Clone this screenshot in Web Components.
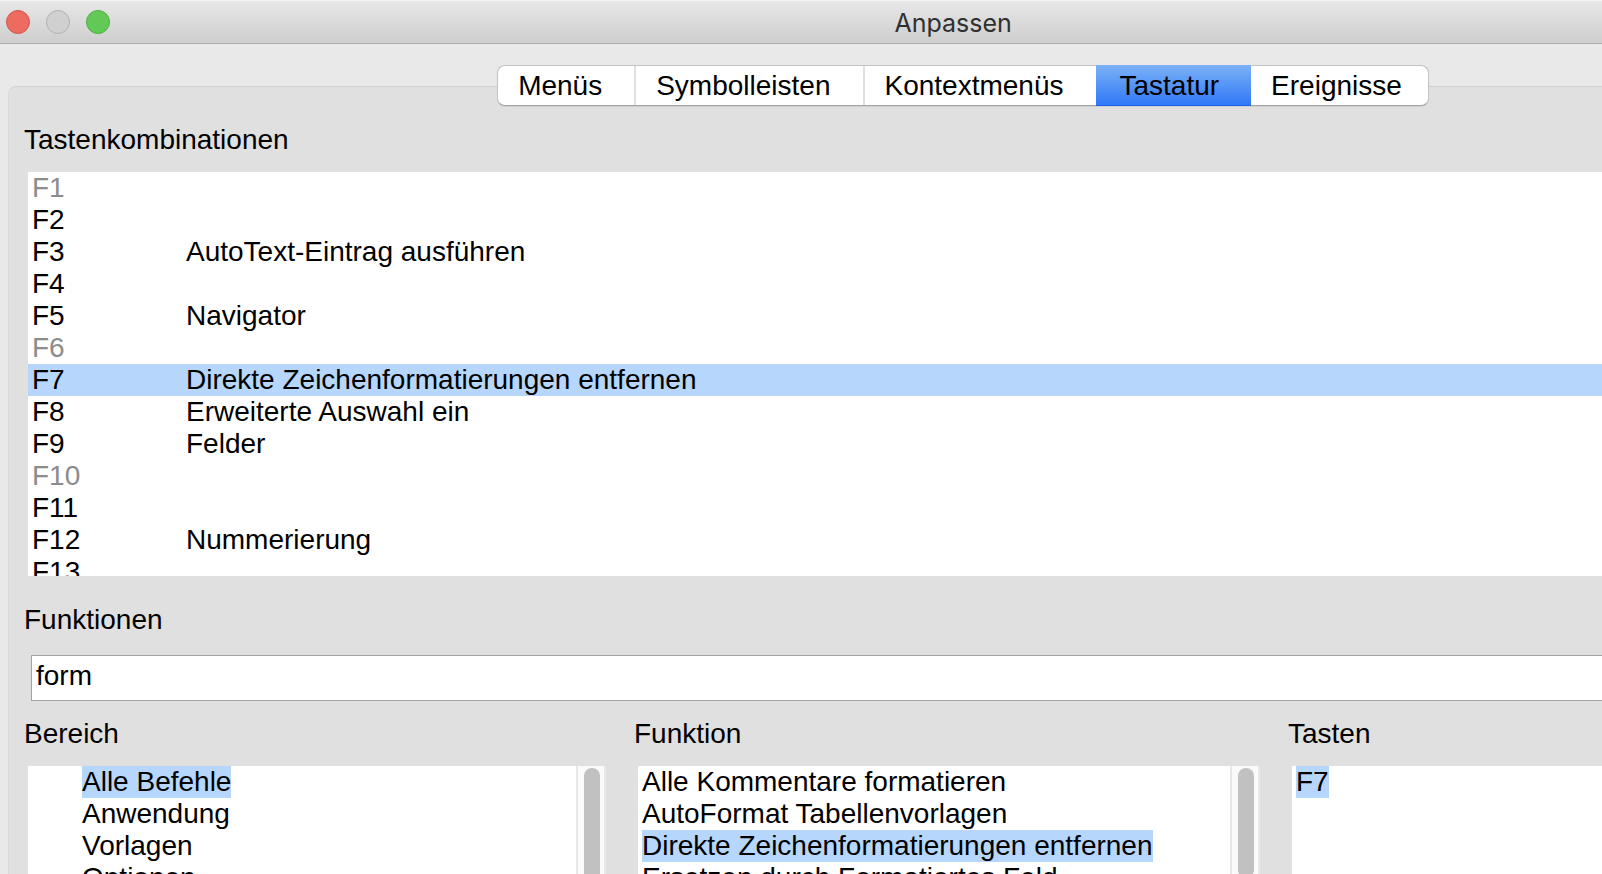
<!DOCTYPE html>
<html lang="de">
<head>
<meta charset="utf-8">
<title>Anpassen</title>
<style>
    body {
        margin: 0;
        height: 100vh;
        overflow: hidden;
        background: #e9e9e9;
        color: #000;
        font: 28px/32px "Liberation Sans", Arial, sans-serif;
    }
</style>
</head>
<body>
<customize-dialog></customize-dialog>

<script>
class TitleBar extends HTMLElement {
    constructor() {
        super();
        this.attachShadow({ mode: 'open' });
        this.shadowRoot.innerHTML = `
            <style>
                :host {
                    display: grid;
                    grid-template-columns: 19% 1fr;
                    align-items: center;
                    box-sizing: border-box;
                    height: 44px;
                    border-top: 1px solid #f4f4f4;
                    border-bottom: 1px solid #ababab;
                    background: linear-gradient(#e7e7e7, #cecece);
                }
                .lights {
                    display: flex;
                    gap: 16px;
                    padding-left: 6px;
                }
                button {
                    width: 24px;
                    height: 24px;
                    padding: 0;
                    border: 1px solid #b3b3b3;
                    border-radius: 50%;
                    background: #d0d0d0;
                }
                .close {
                    background: #ee6b60;
                    border-color: #d2564d;
                }
                .zoom {
                    background: #62c956;
                    border-color: #4fae42;
                }
                h1 {
                    margin: 0;
                    padding-top: 2px;
                    text-align: center;
                    font: 400 25px/32px Inter, sans-serif;
                    color: #303030;
                }
            </style>
            <div class="lights">
                <button class="close" aria-label="Schließen"></button>
                <button disabled aria-label="Minimieren"></button>
                <button class="zoom" aria-label="Zoomen"></button>
            </div>
            <h1><slot></slot></h1>
        `;
    }
}

class TabStrip extends HTMLElement {
    constructor() {
        super();
        this.attachShadow({ mode: 'open' });
        this.shadowRoot.innerHTML = `
            <style>
                :host {
                    display: flex;
                    justify-content: center;
                }
                div {
                    display: flex;
                    border: 1px solid #c3c3c3;
                    border-bottom-color: #a3a3a3;
                    border-radius: 8px;
                    background: #fff;
                    box-shadow: 0 1px 1px #cfcfcf;
                }
                button {
                    font: inherit;
                    color: inherit;
                    padding: 4px 32px 3px 20px;
                    border: 0;
                    border-right: 2px solid #e0e0e0;
                    background: none;
                }
                button:last-child {
                    padding-right: 26px;
                    border-right: 0;
                }
                button[aria-selected="true"] {
                    margin: -1px 0 -1px -2px;
                    padding: 5px 32px 3px 24px;
                    border-right: 0;
                    border-bottom: 1px solid #2361ee;
                    background: linear-gradient(#7bb1f5, #3079f8);
                }
            </style>
            <div role="tablist"></div>
        `;
    }

    connectedCallback() {
        const list = this.shadowRoot.querySelector('div');
        this.getAttribute('tabs').split(',').forEach((name) => {
            const button = document.createElement('button');
            button.setAttribute('role', 'tab');
            button.setAttribute('aria-selected', name === this.getAttribute('active'));
            button.textContent = name;
            button.addEventListener('click', () => this.select(button));
            list.appendChild(button);
        });
    }

    select(button) {
        this.shadowRoot.querySelectorAll('button').forEach((tab) => {
            tab.setAttribute('aria-selected', tab === button);
        });
    }
}

class ShortcutTable extends HTMLElement {
    constructor() {
        super();
        this.attachShadow({ mode: 'open' });
        this.rows = [
            ['F1', '', true],
            ['F2', ''],
            ['F3', 'AutoText-Eintrag ausführen'],
            ['F4', ''],
            ['F5', 'Navigator'],
            ['F6', '', true],
            ['F7', 'Direkte Zeichenformatierungen entfernen'],
            ['F8', 'Erweiterte Auswahl ein'],
            ['F9', 'Felder'],
            ['F10', '', true],
            ['F11', ''],
            ['F12', 'Nummerierung'],
            ['F13', '']
        ];
        this.selected = 'F7';
    }

    connectedCallback() {
        const rows = this.rows.map(([key, command, reserved]) => {
            const state = reserved ? 'reserved' : key === this.selected ? 'selected' : '';
            return `<tr class="${state}"><td class="key">${key}</td><td>${command}</td></tr>`;
        }).join('');

        this.shadowRoot.innerHTML = `
            <style>
                :host {
                    display: block;
                    height: 404px;
                    overflow: hidden;
                    background: #fff;
                }
                table {
                    width: 100%;
                    border-collapse: collapse;
                    table-layout: fixed;
                }
                td {
                    height: 32px;
                    padding: 0;
                }
                .key {
                    width: 154px;
                    padding-left: 4px;
                }
                .reserved {
                    color: #8c8c8c;
                }
                .selected {
                    background: #b7d6fb;
                }
            </style>
            <table aria-label="Tastenkombinationen"><tbody>${rows}</tbody></table>
        `;
    }
}

class ListPane extends HTMLElement {
    constructor() {
        super();
        this.attachShadow({ mode: 'open' });
        this.shadowRoot.innerHTML = `
            <style>
                :host {
                    display: flex;
                    flex-direction: column;
                    gap: 16px;
                    min-width: 0;
                    --indent: 4px;
                    --thumb: 140px;
                }
                h2 {
                    margin: 0;
                    font: inherit;
                }
                .box {
                    flex: 1;
                    display: flex;
                    min-height: 0;
                    overflow: hidden;
                    margin-left: 4px;
                    background: #fff;
                }
                ul {
                    flex: 1;
                    margin: 0;
                    padding: 0 0 0 var(--indent);
                    list-style: none;
                    white-space: nowrap;
                }
                li {
                    width: fit-content;
                }
                li[aria-selected="true"] {
                    background: #b7d6fb;
                }
                .track {
                    box-sizing: border-box;
                    width: 30px;
                    padding: 2px 4px 0 6px;
                    border: solid #e8e8e8;
                    border-width: 0 2px;
                    background: #fafafa;
                }
                .thumb {
                    width: 16px;
                    height: var(--thumb);
                    border-radius: 8px;
                    background: #c1c1c1;
                }
                :host(:not([scrollable])) .track {
                    display: none;
                }
            </style>
            <h2 id="label"></h2>
            <div class="box">
                <ul role="listbox" aria-labelledby="label"></ul>
                <div class="track"><div class="thumb"></div></div>
            </div>
        `;
    }

    connectedCallback() {
        this.shadowRoot.querySelector('h2').textContent = this.getAttribute('label');
        const list = this.shadowRoot.querySelector('ul');
        this.getAttribute('items').split('|').forEach((text) => {
            const item = document.createElement('li');
            item.setAttribute('role', 'option');
            item.setAttribute('aria-selected', text === this.getAttribute('selected'));
            item.textContent = text;
            list.appendChild(item);
        });
    }
}

class SearchField extends HTMLElement {
    constructor() {
        super();
        this.attachShadow({ mode: 'open' });
        this.shadowRoot.innerHTML = `
            <style>
                :host {
                    display: flex;
                    flex-direction: column;
                    gap: 19px;
                }
                input {
                    box-sizing: border-box;
                    height: 46px;
                    margin: 0 -1px 0 7px;
                    padding: 0 4px 4px;
                    border: 1px solid #a3a3a3;
                    background: #fff;
                    color: inherit;
                    font: inherit;
                    outline: none;
                }
            </style>
            <label for="search"><slot></slot></label>
            <input id="search" type="text">
        `;
    }

    connectedCallback() {
        this.shadowRoot.querySelector('input').value = this.getAttribute('value');
    }
}

class CustomizeDialog extends HTMLElement {
    constructor() {
        super();
        this.attachShadow({ mode: 'open' });
        this.shadowRoot.innerHTML = `
            <style>
                :host {
                    display: flex;
                    flex-direction: column;
                    height: 100%;
                }
                tab-strip {
                    /* The strip straddles the top edge of the panel */
                    margin: 21px 0 -20px 324px;
                    z-index: 1;
                }
                main {
                    flex: 1;
                    min-height: 0;
                    display: flex;
                    flex-direction: column;
                    margin-left: 8px;
                    padding: 37px 0 0 15px;
                    border: solid #d0d0d0;
                    border-width: 1px 0 0 1px;
                    border-left-color: #dadada;
                    border-top-left-radius: 8px;
                    background: #e0e0e0;
                }
                h2 {
                    margin: 0 0 16px;
                    font: inherit;
                }
                shortcut-table {
                    flex: none;
                    margin: 0 0 28px 4px;
                }
                .lists {
                    flex: 1;
                    min-height: 0;
                    display: grid;
                    grid-template: minmax(0, 1fr) / 582fr 626fr 314fr;
                    gap: 28px;
                    margin-top: 17px;
                }
                .areas {
                    --indent: 54px;
                }
                .functions {
                    --thumb: 110px;
                }
            </style>
            <title-bar>Anpassen</title-bar>
            <tab-strip tabs="Menüs,Symbolleisten,Kontextmenüs,Tastatur,Ereignisse" active="Tastatur"></tab-strip>
            <main>
                <h2>Tastenkombinationen</h2>
                <shortcut-table></shortcut-table>
                <search-field value="form">Funktionen</search-field>
                <div class="lists">
                    <list-pane class="areas" scrollable label="Bereich" selected="Alle Befehle"
                        items="Alle Befehle|Anwendung|Vorlagen|Optionen"></list-pane>
                    <list-pane class="functions" scrollable label="Funktion" selected="Direkte Zeichenformatierungen entfernen"
                        items="Alle Kommentare formatieren|AutoFormat Tabellenvorlagen|Direkte Zeichenformatierungen entfernen|Ersetzen durch Formatiertes Feld"></list-pane>
                    <list-pane label="Tasten" selected="F7" items="F7"></list-pane>
                </div>
            </main>
        `;
    }
}

customElements.define('title-bar', TitleBar);
customElements.define('tab-strip', TabStrip);
customElements.define('shortcut-table', ShortcutTable);
customElements.define('list-pane', ListPane);
customElements.define('search-field', SearchField);
customElements.define('customize-dialog', CustomizeDialog);
</script>
</body>
</html>
